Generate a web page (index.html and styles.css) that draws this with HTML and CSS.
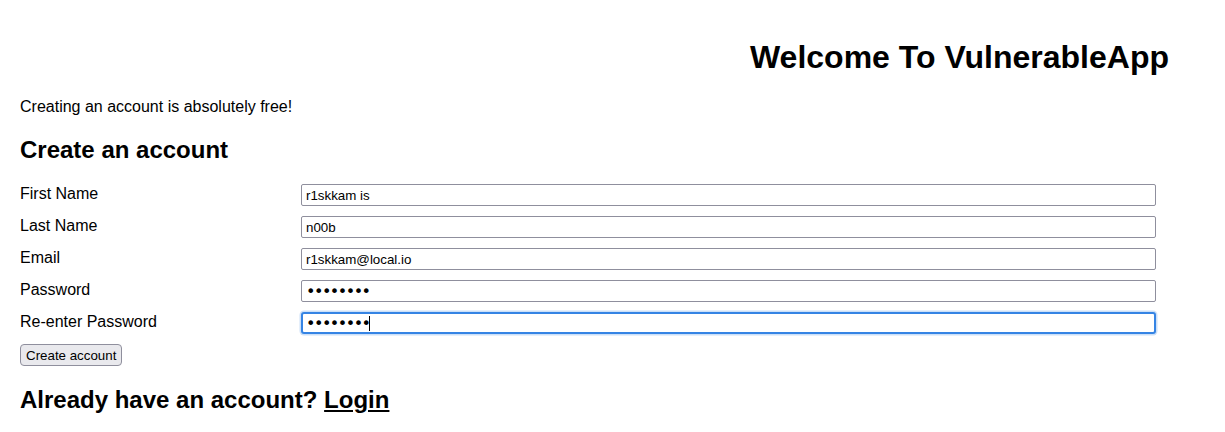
FILE: index.html
```html
<!DOCTYPE html>
<html lang="en">
<head>
<meta charset="utf-8">
<title>VulnerableApp - Register</title>
<link rel="stylesheet" href="styles.css">
</head>
<body>
<main class="page">
  <h1 class="title">Welcome To VulnerableApp</h1>
  <p class="intro">Creating an account is absolutely free!</p>
  <h2 class="section">Create an account</h2>
  <form class="form">
    <div class="grid">
      <label class="label" for="fn">First Name</label>
      <input class="field" id="fn" type="text" value="r1skkam is">
      <label class="label" for="ln">Last Name</label>
      <input class="field" id="ln" type="text" value="n00b">
      <label class="label" for="em">Email</label>
      <input class="field" id="em" type="text" value="r1skkam@local.io">
      <label class="label" for="pw">Password</label>
      <input class="field pass" id="pw" type="password" value="abcdefgh">
      <label class="label" for="pw2">Re-enter Password</label>
      <span class="caret-wrap">
        <input class="field pass focused" id="pw2" type="password" value="abcdefgh">
        <span class="caret"></span>
      </span>
    </div>
    <button class="btn" type="button">Create account</button>
  </form>
  <h2 class="section">Already have an account? <a class="link" href="#">Login</a></h2>
</main>
</body>
</html>
```
FILE: styles.css
```css
html, body {
  margin: 0;
  padding: 0;
  background: #fff;
}
body {
  font-family: "Liberation Sans", Arial, sans-serif;
  color: #000;
}
.page {
  padding: 18px 20px 0 20px;
}
.title {
  font-size: 32px;
  font-weight: bold;
  text-align: right;
  margin: 21px 36px 22.4px 0;
  line-height: normal;
}
.intro {
  font-size: 16px;
  margin: 16px 0;
}
.section {
  font-size: 24px;
  font-weight: bold;
  margin: 19.92px 0;
}
.grid {
  display: grid;
  grid-template-columns: 281px 855px;
  row-gap: 10px;
}
.label {
  font-size: 16px;
  line-height: normal;
  align-self: start;
  padding-top: 1px;
}
.field {
  box-sizing: border-box;
  height: 22px;
  width: 855px;
  margin: 0;
  padding: 1px 4px;
  border: 1px solid #8f8f9d;
  border-radius: 2px;
  font-family: "Liberation Sans", Arial, sans-serif;
  font-size: 13.33px;
  color: #000;
  background: #fff;
  outline: none;
}
.pass {
  font-family: "DejaVu Sans", sans-serif;
  font-size: 16px;
  letter-spacing: -1.5px;
}
.focused {
  border: 2px solid #3584e4;
  padding: 0 3px;
  box-shadow: 0 0 0 1.5px rgba(53, 132, 228, 0.25);
  border-radius: 3px;
}
.caret-wrap {
  position: relative;
  display: block;
  height: 22px;
}
.caret {
  position: absolute;
  left: 68px;
  top: 4px;
  width: 1px;
  height: 15px;
  background: #000;
}
.btn {
  display: block;
  margin-top: 10px;
  height: 22px;
  padding: 0 5px;
  font-family: "Liberation Sans", Arial, sans-serif;
  font-size: 13.33px;
  color: #000;
  background: #e9e9ed;
  border: 1px solid #8f8f9d;
  border-radius: 4px;
}
.link {
  color: #000;
  text-decoration: underline;
}
```
